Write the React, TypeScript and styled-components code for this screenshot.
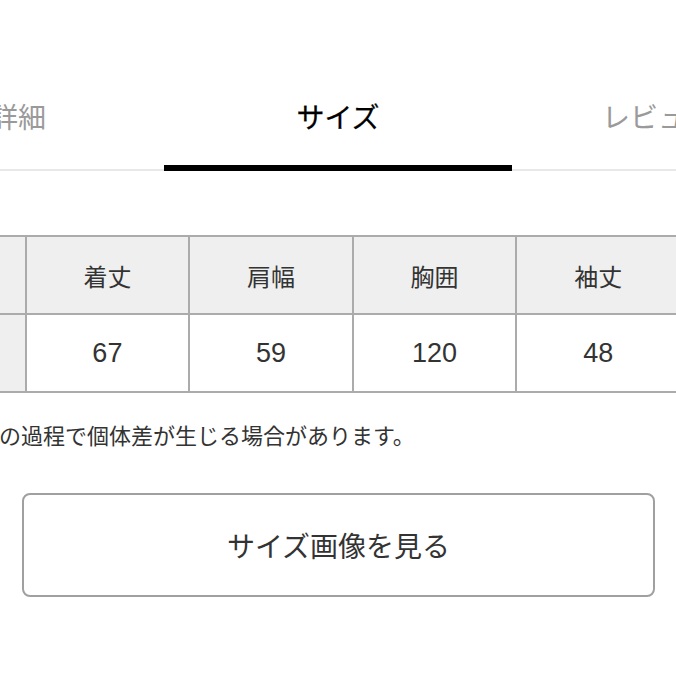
import React from "react";
import styled, { createGlobalStyle } from "styled-components";

const Global = createGlobalStyle`
  html, body {
    margin: 0;
    padding: 0;
    background: #ffffff;
    overflow: hidden;
  }
  body {
    font-family: "Noto Sans CJK JP", "Noto Sans", sans-serif;
    color: #333;
  }
`;

const Page = styled.div`
  width: 676px;
  height: 676px;
  overflow: hidden;
  padding-top: 84px;
  box-sizing: border-box;
`;

const TabBar = styled.div`
  display: flex;
  margin-left: -142px;
  border-bottom: 2px solid #e8e8e8;
  width: 960px;
`;

const Tab = styled.div<{ $active?: boolean }>`
  position: relative;
  flex: 0 0 320px;
  height: 85px;
  text-align: center;
  line-height: 64px;
  font-size: 28px;
  font-weight: 400;
  color: ${(p) => (p.$active ? "#000" : "#9a9a9a")};
  -webkit-text-stroke: ${(p) => (p.$active ? "0.25px #000" : "0")};
  &::after {
    content: "";
    display: ${(p) => (p.$active ? "block" : "none")};
    position: absolute;
    left: -14px;
    right: -14px;
    bottom: -2px;
    height: 6px;
    background: #000;
  }
`;

const SizeTable = styled.table`
  margin-top: 64px;
  margin-left: -139px;
  border-collapse: collapse;
  table-layout: fixed;
  width: 820px;
`;

const Cell = styled.td<{ $head?: boolean; $label?: boolean }>`
  height: 76px;
  padding: 0;
  border: 2px solid #ababab;
  text-align: center;
  vertical-align: middle;
  font-weight: 400;
  color: #333;
  background: ${(p) => (p.$head || p.$label ? "#efefef" : "#fff")};
  font-family: ${(p) =>
    p.$head ? `"Noto Sans CJK JP", sans-serif` : `"Liberation Sans", "Noto Sans CJK JP", sans-serif`};
  font-size: ${(p) => (p.$head ? "24px" : "27px")};
`;

const Note = styled.p`
  margin: 25px 0 0 -1px;
  font-size: 22px;
  line-height: 33px;
  color: #333;
  white-space: nowrap;
`;

const ViewButton = styled.button`
  display: block;
  margin: 42px 0 0 22px;
  width: 633px;
  height: 104px;
  border: 2px solid #a0a0a0;
  border-radius: 8px;
  background: #fff;
  font-family: "Noto Sans CJK JP", sans-serif;
  font-size: 28px;
  color: #333;
  box-sizing: border-box;
  padding: 0;
`;

const heads = ["サイズ", "着丈", "肩幅", "胸囲", "袖丈"];
const values = ["フリー", "67", "59", "120", "48"];

export default function App() {
  return (
    <>
      <Global />
      <Page>
        <TabBar>
          <Tab>詳細</Tab>
          <Tab $active>サイズ</Tab>
          <Tab>レビュー</Tab>
        </TabBar>
        <SizeTable>
          <tbody>
            <tr>
              {heads.map((h) => (
                <Cell as="th" key={h} $head>
                  {h}
                </Cell>
              ))}
            </tr>
            <tr>
              {values.map((v, i) => (
                <Cell key={v} $label={i === 0}>
                  {v}
                </Cell>
              ))}
            </tr>
          </tbody>
        </SizeTable>
        <Note>の過程で個体差が生じる場合があります。</Note>
        <ViewButton>サイズ画像を見る</ViewButton>
      </Page>
    </>
  );
}
